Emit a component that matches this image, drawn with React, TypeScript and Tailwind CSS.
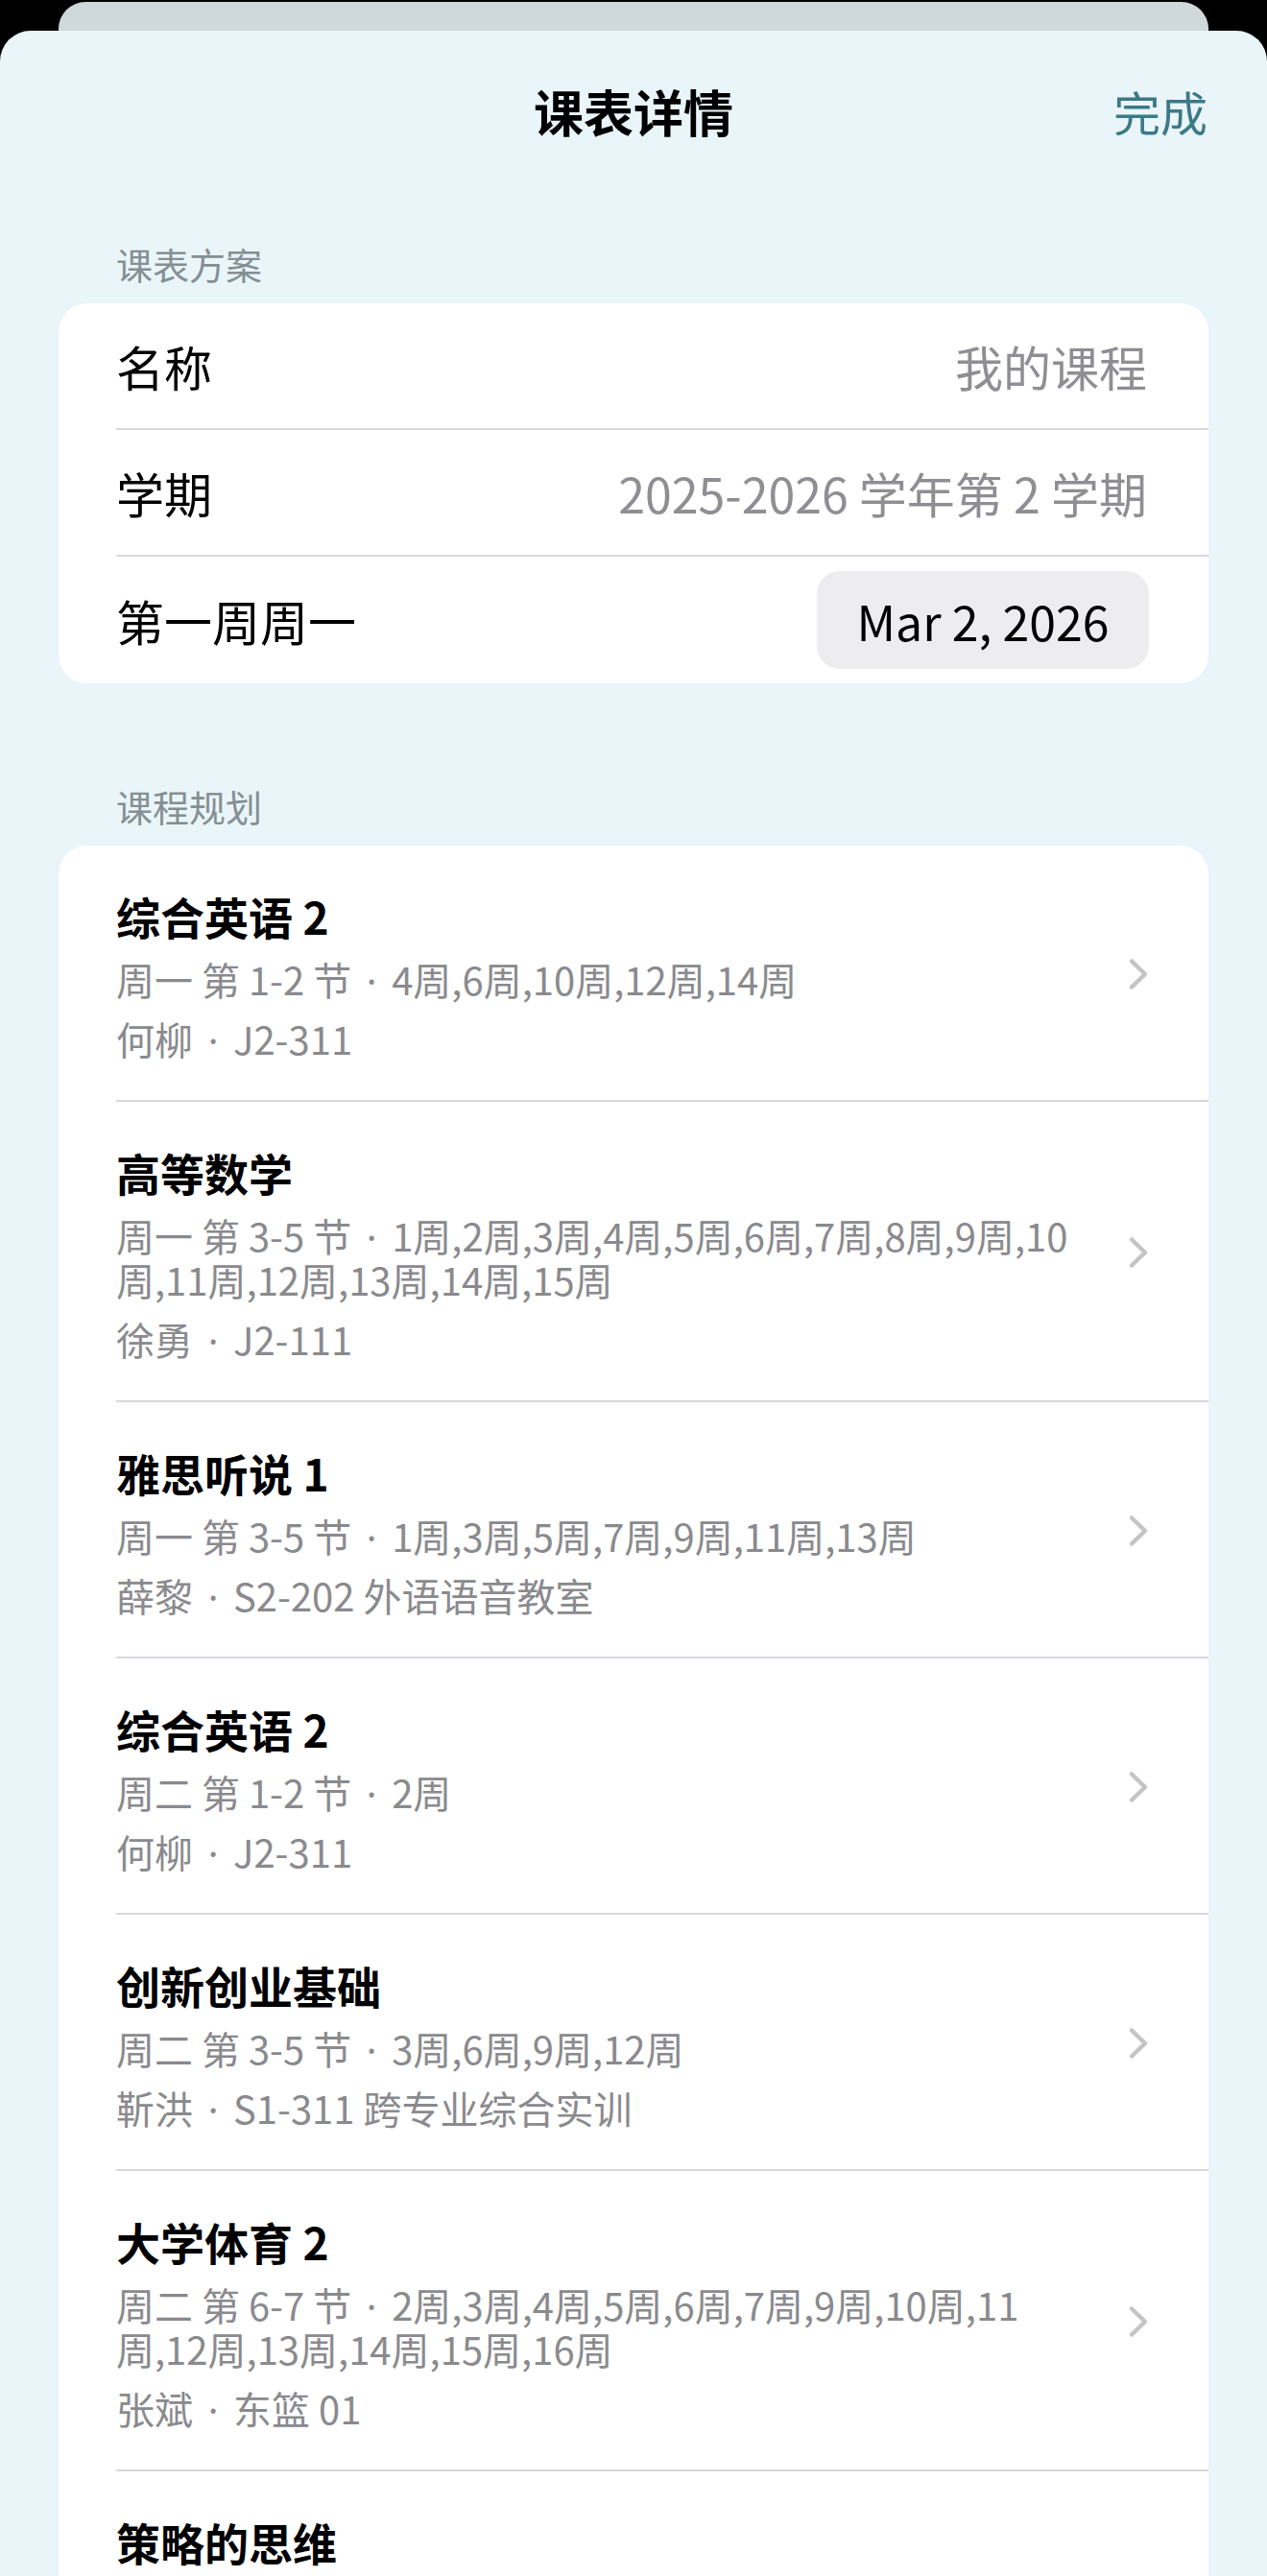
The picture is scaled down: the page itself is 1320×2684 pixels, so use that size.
import { Fragment } from 'react';

interface Course {
  name: string;
  lines: string[];
}

const courses: Course[] = [
  { name: '综合英语 2', lines: ['周一 第 1-2 节 · 4周,6周,10周,12周,14周', '何柳 · J2-311'] },
  {
    name: '高等数学',
    lines: ['周一 第 3-5 节 · 1周,2周,3周,4周,5周,6周,7周,8周,9周,10周,11周,12周,13周,14周,15周', '徐勇 · J2-111'],
  },
  { name: '雅思听说 1', lines: ['周一 第 3-5 节 · 1周,3周,5周,7周,9周,11周,13周', '薛黎 · S2-202 外语语音教室'] },
  { name: '综合英语 2', lines: ['周二 第 1-2 节 · 2周', '何柳 · J2-311'] },
  { name: '创新创业基础', lines: ['周二 第 3-5 节 · 3周,6周,9周,12周', '靳洪 · S1-311 跨专业综合实训'] },
  {
    name: '大学体育 2',
    lines: ['周二 第 6-7 节 · 2周,3周,4周,5周,6周,7周,9周,10周,11周,12周,13周,14周,15周,16周', '张斌 · 东篮 01'],
  },
];

const font = { fontFamily: '"Noto Sans CJK SC", "Noto Sans", sans-serif' };

// separator dot gets a fixed box so the spacing around it matches
function Dotted({ text }: { text: string }) {
  const parts = text.split(' · ');
  return (
    <>
      {parts.map((p, i) => (
        <Fragment key={i}>
          {i > 0 && <span className="inline-block w-[42px] text-center leading-none font-['Noto_Sans']">·</span>}
          {p}
        </Fragment>
      ))}
    </>
  );
}

function Chevron() {
  return (
    <svg width="22" height="34" viewBox="0 0 22 34" fill="none">
      <path d="M4 3.5 L18 17 L4 30.5" stroke="#c4c4c7" strokeWidth="4.5" strokeLinecap="round" strokeLinejoin="round" />
    </svg>
  );
}

export default function App() {
  return (
    <div className="h-[2684px] overflow-hidden bg-black" style={font}>
      {/* sheet behind */}
      <div className="mx-[61px] mt-[2px] h-[30px] rounded-t-[28px] bg-[#cfd9db]" />

      <div className="min-h-[2700px] rounded-t-[32px] bg-[#eaf5fa] pt-[54px]">
        <div className="grid grid-cols-[1fr_auto_1fr] items-center px-[62px]">
          <div />
          <h1 className="text-[52px] leading-[60px] font-bold text-black">课表详情</h1>
          <button className="justify-self-end text-[49px] leading-[60px] text-[#3b7a87]">完成</button>
        </div>

        <div className="mt-[106px] px-[61px]">
          <h2 className="pl-[60px] text-[38px] leading-[46px] text-[#858f93]">课表方案</h2>
          <div className="mt-[18px] overflow-hidden rounded-[30px] bg-white">
            <div className="pl-[60px]">
              <div className="flex h-[132px] items-center justify-between border-b-2 border-[#d8d8dc] pr-[64px]">
                <span className="text-[50px] text-black">名称</span>
                <span className="text-[50px] text-[#8e8e93]">我的课程</span>
              </div>
              <div className="flex h-[132px] items-center justify-between border-b-2 border-[#d8d8dc] pr-[64px]">
                <span className="text-[50px] text-black">学期</span>
                <span className="text-[50px] text-[#8e8e93]">2025-2026 学年第 2 学期</span>
              </div>
              <div className="flex h-[132px] items-center justify-between pr-[62px]">
                <span className="text-[50px] text-black">第一周周一</span>
                <span className="flex h-[102px] w-[346px] items-center justify-center rounded-[24px] bg-[#ededf0] text-[50px] text-black">
                  Mar 2, 2026
                </span>
              </div>
            </div>
          </div>
        </div>

        <div className="mt-[105px] px-[61px]">
          <h2 className="pl-[60px] text-[38px] leading-[46px] text-[#858f93]">课程规划</h2>
          <div className="mt-[18px] rounded-t-[30px] bg-white">
            {courses.map((c, i) => (
              <div key={i} className="pl-[60px]">
                <div className="flex items-center border-b-2 border-[#d8d8dc] pr-[62px] pt-[43px] pb-[41px]">
                  <div className="w-[1032px]">
                    <div className="text-[46px] leading-[60px] font-bold text-black">{c.name}</div>
                    {c.lines.map((l, j) => (
                      <p
                        key={j}
                        className={`${j === 0 ? 'mt-[13px]' : 'mt-[16px]'} text-[40px] leading-[46px] text-[#8a8a8e] [font-variant-numeric:proportional-nums]`}
                      >
                        <Dotted text={l} />
                      </p>
                    ))}
                  </div>
                  <div className="ml-auto">
                    <Chevron />
                  </div>
                </div>
              </div>
            ))}
            <div className="pl-[60px]">
              <div className="pt-[43px] pb-[40px] pr-[62px]">
                <div className="text-[46px] leading-[60px] font-bold text-black">策略的思维</div>
              </div>
            </div>
          </div>
        </div>
      </div>
    </div>
  );
}
